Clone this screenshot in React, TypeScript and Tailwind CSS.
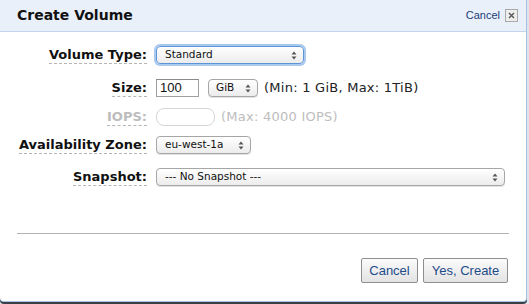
import type { ReactNode } from "react";

const labelFont = { fontFamily: '"DejaVu Sans", Verdana, sans-serif' };

function Arrows() {
  return (
    <svg width="6" height="9" viewBox="0 0 6 9" className="shrink-0">
      <path d="M3 0.5 L5.5 3.5 L0.5 3.5 Z" fill="#555" />
      <path d="M3 8.5 L5.5 5.5 L0.5 5.5 Z" fill="#555" />
    </svg>
  );
}

function Select({
  value,
  width,
  focused = false,
  pl = "pl-[8px]",
}: {
  value: string;
  width: string;
  focused?: boolean;
  pl?: string;
}) {
  return (
    <div
      className={`${width} h-[18px] flex items-center justify-between ${pl} pr-[6px] rounded-[4px] border bg-gradient-to-b from-white to-[#ececec] text-[10.5px] text-[#111] ${
        focused
          ? "border-[#5d94d6] shadow-[0_0_0_2px_#a9c9ef]"
          : "border-[#a6a6a6] shadow-[0_1px_0_#e2e2e2]"
      }`}
      style={labelFont}
    >
      <span className="whitespace-nowrap">{value}</span>
      <Arrows />
    </div>
  );
}

function Row({
  label,
  height,
  disabled = false,
  children,
}: {
  label: string;
  height: string;
  disabled?: boolean;
  children: ReactNode;
}) {
  return (
    <div className={`flex items-center ${height}`}>
      <div className="w-[147px] shrink-0 flex justify-end">
        <span
          className={`text-[13px] font-bold leading-[15px] pb-[1px] border-b border-dashed border-[#b5b5b5] ${
            disabled ? "text-[#bdbdbd]" : "text-[#111]"
          }`}
          style={labelFont}
        >
          {label}
        </span>
      </div>
      <div className="ml-[9px] flex items-center">{children}</div>
    </div>
  );
}

export default function App() {
  return (
    <div className="w-[529px] h-[304px] bg-[#dfe3e8] overflow-hidden">
      <div className="w-[527px] h-[302px] bg-white border-r border-b border-[#a3c2e6] rounded-b-[4px] shadow-[0_2px_0_#3b4047] flex flex-col">
        {/* header */}
        <div className="h-[32px] shrink-0 bg-[#e9f0fa] border-b border-[#c3d5ec] flex items-center justify-between pl-[17px] pr-[8px]">
          <span
            className="text-[14px] font-bold text-[#111]"
            style={labelFont}
          >
            Create Volume
          </span>
          <div className="flex items-center gap-[5px]">
            <span
              className="text-[11px] text-[#1d3d78]"
              style={{ fontFamily: '"Liberation Sans", Arial, sans-serif' }}
            >
              Cancel
            </span>
            <div className="w-[13px] h-[13px] border border-[#a9a9a9] bg-[#ededed] flex items-center justify-center">
              <svg width="7" height="7" viewBox="0 0 7 7">
                <path d="M1 1 L6 6 M6 1 L1 6" stroke="#555" strokeWidth="1.4" />
              </svg>
            </div>
          </div>
        </div>

        {/* form */}
        <div className="flex flex-col pt-[8px]">
          <Row label="Volume Type:" height="h-[30px]">
            <Select value="Standard" width="w-[148px]" focused />
          </Row>
          <Row label="Size:" height="h-[36px]">
            <div
              className="w-[43px] h-[18px] border border-[#a0a0a0] border-t-[#8a8a8a] bg-white pl-[3px] flex items-center text-[13px] text-[#111]"
              style={{ fontFamily: '"Liberation Sans", Arial, sans-serif' }}
            >
              100
            </div>
            <div className="ml-[9px]">
              <Select value="GiB" width="w-[50px]" pl="pl-[7px]" />
            </div>
            <span
              className="ml-[6px] text-[13px] tracking-[0.25px] text-[#222] whitespace-nowrap"
              style={labelFont}
            >
              (Min: 1 GiB, Max: 1TiB)
            </span>
          </Row>
          <Row label="IOPS:" height="h-[22px]" disabled>
            <div className="w-[59px] h-[18px] rounded-[8px] border border-[#d6d6d6] bg-white" />
            <span
              className="ml-[6px] text-[13px] tracking-[0.25px] text-[#bdbdbd] whitespace-nowrap"
              style={labelFont}
            >
              (Max: 4000 IOPS)
            </span>
          </Row>
          <Row label="Availability Zone:" height="h-[34px]">
            <Select value="eu-west-1a" width="w-[95px]" />
          </Row>
          <Row label="Snapshot:" height="h-[30px]">
            <Select value="--- No Snapshot ---" width="w-[349px]" />
          </Row>
        </div>

        {/* divider */}
        <div className="mt-[41px] mx-[17px] border-t border-[#b3b3b3]" />

        {/* buttons */}
        <div className="flex justify-end gap-[5px] pr-[18px] pt-[24px]">
          {["Cancel", "Yes, Create"].map((t) => (
            <button
              key={t}
              className={`h-[25px] ${
                t === "Cancel" ? "w-[57px]" : "w-[85px]"
              } border border-[#8e8e8e] rounded-[2px] bg-gradient-to-b from-[#fbfbfb] to-[#e3e3e3] text-[13px] text-[#1e4c8a]`}
              style={{ fontFamily: '"Liberation Sans", Tahoma, sans-serif' }}
            >
              {t}
            </button>
          ))}
        </div>
      </div>
    </div>
  );
}
